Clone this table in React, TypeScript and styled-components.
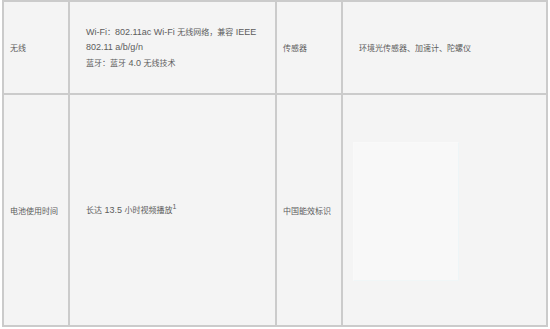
import React from 'react';
import styled, { createGlobalStyle } from 'styled-components';

const GlobalStyle = createGlobalStyle`
  html, body {
    margin: 0;
    padding: 0;
    background: #fff;
  }
  body {
    font-family: "Liberation Sans", "Noto Sans CJK SC", sans-serif;
  }
`;

const SpecTable = styled.div`
  display: grid;
  grid-template-columns: 64px 205px 64px 203px;
  grid-template-rows: 91px 230px;
  gap: 2px;
  padding: 2px;
  margin-left: 2px;
  width: max-content;
  background: #cbcbcb;
`;

const Cell = styled.div<{ indent: number }>`
  background: #f4f4f4;
  display: flex;
  flex-direction: column;
  justify-content: center;
  padding-left: ${({ indent }) => indent}px;
  color: #5c5c5c;
  font-size: 9px;
  line-height: 15px;
  white-space: nowrap;
`;

const Line = styled.div``;

// CJK runs render a little smaller than the latin text in the original
const Han = styled.span`
  font-family: "Noto Sans CJK SC", sans-serif;
  font-size: 8px;
`;

const Sup = styled.sup`
  font-size: 7px;
  line-height: 0;
  vertical-align: 4px;
`;

const LabelFrame = styled.div`
  width: 104px;
  height: 137px;
  margin-top: 2px;
  background: #f8f8f8;
  border: 1px solid #f9f9f9;
  border-right-color: #eef5f7;
  border-bottom-color: #f0f6f7;
`;

const splitHan = (text: string) =>
  text.split(/([\u3000-\u9fff\uff00-\uffef]+)/).map((part, i) =>
    i % 2 === 1 ? <Han key={i}>{part}</Han> : <React.Fragment key={i}>{part}</React.Fragment>
  );

export default function App() {
  return (
    <>
      <GlobalStyle />
      <SpecTable>
        <Cell indent={6}>{splitHan('无线')}</Cell>
        <Cell indent={16}>
          <Line>{splitHan('Wi-Fi：802.11ac Wi-Fi 无线网络，兼容 IEEE')}</Line>
          <Line>802.11 a/b/g/n</Line>
          <Line>{splitHan('蓝牙：蓝牙 4.0 无线技术')}</Line>
        </Cell>
        <Cell indent={6}>{splitHan('传感器')}</Cell>
        <Cell indent={16}>{splitHan('环境光传感器、加速计、陀螺仪')}</Cell>

        <Cell indent={6}>{splitHan('电池使用时间')}</Cell>
        <Cell indent={16}>
          <Line>
            {splitHan('长达 13.5 小时视频播放')}
            <Sup>1</Sup>
          </Line>
        </Cell>
        <Cell indent={6}>{splitHan('中国能效标识')}</Cell>
        <Cell indent={10}>
          <LabelFrame />
        </Cell>
      </SpecTable>
    </>
  );
}
